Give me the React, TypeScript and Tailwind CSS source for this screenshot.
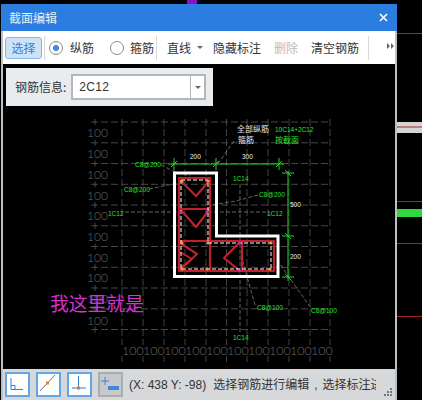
import React from "react";

const FONT = "font-['Noto_Sans_CJK_SC','Liberation_Sans',sans-serif]";

const rows = [122, 142.8, 163.5, 184.3, 205, 225.8, 246.5, 267.3, 288, 308.8, 329.5];
const cols = [122, 143, 164, 185, 206, 226.5, 247, 268, 289, 310, 330];
const leftLabels = [132, 153, 174, 194.5, 215, 236, 257, 277, 298, 320];
const bottomLabels = [122, 143, 164, 185, 206, 227, 248, 269, 290, 311];

const greenLabels: [string, number, number][] = [
  ["C8@200", 135, 166.5],
  ["C8@200", 124, 191.5],
  ["1C12", 108, 215.5],
  ["1C14", 233, 180.5],
  ["C8@200", 259, 196.5],
  ["1C12", 267, 215.5],
  ["C8@100", 257, 309.5],
  ["C8@100", 311, 312.5],
  ["1C14", 233, 339.5],
  ["10C14+2C12", 275, 132],
];

const whiteLabels: [string, number, number][] = [
  ["200", 190, 159],
  ["300", 242, 159],
  ["500", 290, 206.5],
  ["200", 290, 258.5],
];

const leaders = [
  "M161 165L173 171L190 176",
  "M149 189L178 183",
  "M125 212H181",
  "M234 141L222 158L216 166",
  "M258 195L236 201L212 205",
  "M266 212H208",
  "M240 184V333",
  "M241 255L255 305",
  "M277 260L311 308",
];

function Drawing() {
  return (
    <svg viewBox="3 64 393 305" className="block h-[305px] w-[393px]">
      {rows.map((y) => (
        <path key={y} d={`M91 ${y}H331`} stroke="#585858" strokeWidth="0.8" strokeDasharray="7 3" />
      ))}
      {rows.map((y) => (
        <path key={`t${y}`} d={`M95 ${y - 3}V${y + 3}`} stroke="#585858" strokeWidth="0.8" />
      ))}
      {cols.map((x) => (
        <path key={x} d={`M${x} 119V345M${x} 356V362`} stroke="#525252" strokeWidth="0.8" strokeDasharray="7 3" />
      ))}
      <g fill="#686868" fontFamily="Lato,'Liberation Sans',sans-serif" fontWeight="300" fontSize="12">
        {leftLabels.map((y) => (
          <text key={y} x="87" y={y + 5}>100</text>
        ))}
        {bottomLabels.map((x) => (
          <text key={x} x={x} y="355" fontSize="12.5">100</text>
        ))}
      </g>

      <g fill="none" stroke="#8c8c8c" strokeWidth="0.7" strokeDasharray="4 2">
        {leaders.map((d) => (
          <path key={d} d={d} />
        ))}
      </g>

      <g fill="none" stroke="#22d428" strokeWidth="1">
        <path d="M168 164H284" />
        <path d="M174 158V170M216 158V170M279 158V170" />
        <path d="M171 167L177 161M213 167L219 161M276 167L282 161" />
        <path d="M288 171V281" />
        <path d="M282 173H294M282 236H294M282 277H294" />
        <path d="M285 170L291 176M285 233L291 239M285 274L291 280" />
      </g>

      <path d="M174.5 173H216.5V236H278V276.5H174.5Z" fill="none" stroke="#fff" strokeWidth="3" />

      <g fill="none" stroke="#c0202c" strokeWidth="2.2" strokeLinejoin="round">
        <path d="M179 178H210V241H274V271H179Z" />
        <path d="M179 209H210M179 241H210M210 241V271M242 241V271" />
        <path d="M180 180L196 196L210 180" />
        <path d="M180 209L196 227L210 209" />
        <path d="M180 243L197 254L180 270" />
        <path d="M180 252L192 259L180 268" strokeWidth="1.8" />
        <path d="M240 242L224 258L240 271" />
      </g>

      <path
        d="M181 180H208V243H271V269H181Z"
        fill="none"
        stroke="#ffffff"
        strokeWidth="1"
        strokeDasharray="4 2"
      />

      <g fill="#e8a040">
        <circle cx="182" cy="181" r="1.6" />
        <circle cx="208" cy="181" r="1.6" />
        <circle cx="208" cy="243" r="1.6" />
        <circle cx="182" cy="243" r="1.6" />
        <circle cx="182" cy="269" r="1.6" />
        <circle cx="207" cy="269" r="1.6" />
        <circle cx="271" cy="243" r="1.6" />
        <circle cx="270" cy="269" r="1.6" />
      </g>
      <g fill="#c028c8">
        <circle cx="181" cy="212" r="1.5" />
        <circle cx="207" cy="212" r="1.5" />
        <circle cx="239.5" cy="243" r="1.5" />
        <circle cx="239.5" cy="271" r="1.5" />
      </g>

      <g fontSize="6.5" fontFamily="'Liberation Sans',sans-serif">
        {greenLabels.map(([t, x, y]) => (
          <text key={`${t}${x}`} x={x} y={y} fill="#2ee034">{t}</text>
        ))}
        {whiteLabels.map(([t, x, y]) => (
          <text key={`${t}${x}`} x={x} y={y} fill="#f0f0f0">{t}</text>
        ))}
      </g>
      <g fontSize="8" fontFamily="'Noto Sans CJK SC',sans-serif">
        <text x="237" y="132" fill="#e8e8e8">全部纵筋</text>
        <text x="238" y="143" fill="#e8e8e8">箍筋</text>
        <text x="275" y="143" fill="#2ee034">按截面</text>
      </g>

      <text x="50" y="311" fill="#d830d0" fontSize="18.8" fontFamily="'Noto Sans CJK SC',sans-serif">
        我这里就是
      </text>
    </svg>
  );
}

function Radio({ checked }: { checked?: boolean }) {
  return (
    <span className="flex h-[14px] w-[14px] items-center justify-center rounded-full border border-[#8a8a8a] bg-white">
      {checked && <span className="h-[6px] w-[6px] rounded-full bg-[#3f86dc]" />}
    </span>
  );
}

function Toolbar() {
  return (
    <div className="flex h-[33px] items-center bg-white pl-[2px] text-xs text-[#333]">
      <button className="h-[22px] w-[37px] rounded-[3px] border border-[#86b6e6] bg-[#cfe3f7] text-[#2f80dd]">选择</button>
      <span className="ml-[2px] h-[24px] w-px bg-[#d8d8d8]" />
      <span className="ml-[4px]"><Radio checked /></span>
      <span className="ml-[7px]">纵筋</span>
      <span className="ml-[16px]"><Radio /></span>
      <span className="ml-[6px]">箍筋</span>
      <span className="ml-[2px] h-[24px] w-px bg-[#d8d8d8]" />
      <span className="ml-[10px]">直线</span>
      <span className="ml-[6px] h-0 w-0 border-x-[3px] border-t-[3px] border-x-transparent border-t-[#666]" />
      <span className="ml-[10px]">隐藏标注</span>
      <span className="ml-[13px] text-[#bcbcbc]">删除</span>
      <span className="ml-[13px]">清空钢筋</span>
      <span className="ml-[9px] h-[24px] w-px bg-[#d8d8d8]" />
      <svg viewBox="0 0 7 6" className="ml-[18px] mb-[4px] h-[6px] w-[7px]" fill="#666">
        <path d="M0 0L3 3L0 6ZM4 0L7 3L4 6Z" />
      </svg>
    </div>
  );
}

function InfoField() {
  return (
    <div className="absolute left-[3px] top-[4px] flex h-[38px] w-[207px] items-center bg-[#e8ecee] pl-[9px] text-xs text-[#333]">
      <span>钢筋信息:</span>
      <div className="ml-[5px] flex h-[26px] w-[135px] items-center border-2 border-[#b4b6b8] bg-white">
        <span className="flex-1 pl-[6px] font-['Liberation_Sans',sans-serif] text-[12px] tracking-[0.3px]">2C12</span>
        <span className="flex h-full w-[14px] items-center justify-center border-l border-[#b4b6b8]">
          <span className="h-0 w-0 border-x-[3px] border-t-[3px] border-x-transparent border-t-[#666]" />
        </span>
      </div>
    </div>
  );
}

function ToolIcon({ active, children }: { active?: boolean; children: React.ReactNode }) {
  return (
    <span
      className={
        active
          ? "h-[25px] w-[25px] border-2 border-[#aaacae] bg-[#c6c8ca]"
          : "h-[25px] w-[25px] border-2 border-[#62a6ea] bg-white"
      }
    >
      <svg viewBox="1 1 21 21" className="block h-full w-full">
        {children}
      </svg>
    </span>
  );
}

function StatusBar() {
  return (
    <div className="relative flex h-[31px] items-center gap-[6px] bg-[#d6d8da] pl-[2px] text-xs text-[#333]">
      <ToolIcon>
        <path d="M5 5V16.5H17" fill="none" stroke="#2f7fd0" strokeWidth="1" />
        <path d="M5 12.5H9V16.5" fill="none" stroke="#2f7fd0" strokeWidth="1" />
      </ToolIcon>
      <ToolIcon>
        <path d="M3 18L18 2" stroke="#555" strokeWidth="0.8" />
        <rect x="9" y="8.5" width="3" height="3" fill="#e8803a" />
      </ToolIcon>
      <ToolIcon>
        <path d="M4 15H18M10.5 3V15" stroke="#2f7fd0" strokeWidth="1" />
        <circle cx="10.5" cy="15" r="1.7" fill="#e0702a" />
      </ToolIcon>
      <ToolIcon active>
        <path d="M2 8H10M6 4V12" stroke="#3f86dc" strokeWidth="1" />
        <rect x="9" y="13" width="11" height="4" fill="#3f86dc" />
      </ToolIcon>
      <span className="w-[247px] overflow-hidden whitespace-nowrap text-[12px]">
        <span className="font-['Liberation_Sans',sans-serif]">(X: 438 Y: -98)</span>
        <span className="ml-[7px]">选择钢筋进行编辑</span>
        <span className="mx-[5px] font-['Liberation_Sans',sans-serif]">,</span>
        <span>选择标注进</span>
      </span>
      <svg viewBox="0 0 8 8" className="absolute bottom-[4px] right-[3px] h-[8px] w-[8px]" fill="#777">
        <path d="M6 0h2v2H6zM3 3h2v2H3zM6 3h2v2H6zM0 6h2v2H0zM3 6h2v2H3zM6 6h2v2H6z" />
      </svg>
    </div>
  );
}

export default function App() {
  return (
    <div className={`relative flex h-[400px] w-[422px] overflow-hidden bg-black ${FONT}`}>
      <span className="absolute left-[187px] top-0 h-[4px] w-[10px] bg-[#8a10c8]" />

      <div className="ml-px mt-[4px] flex h-[396px] w-[396px] flex-col">
        <div className="flex h-[27px] items-center justify-between bg-[#2b7de0] pl-[8px] pr-[9px] text-xs text-[#e8f0fa]">
          <span>截面编辑</span>
          <svg viewBox="0 0 9 9" className="h-[9px] w-[9px]" stroke="#fff" strokeWidth="1.6">
            <path d="M1 1L8 8M8 1L1 8" />
          </svg>
        </div>
        <div className="flex-1 border-x-2 border-[#bcc0c4]">
          <Toolbar />
          <div className="relative bg-black">
            <Drawing />
            <InfoField />
          </div>
          <StatusBar />
        </div>
      </div>

      <svg viewBox="0 0 25 400" className="block h-[400px] w-[25px]">
        <path d="M0 33.5H25M0 201.5H25M0 243.5H25M0 316.5H25" stroke="#a82028" strokeWidth="1" />
        <rect y="122" width="25" height="11" fill="#d4d4d4" />
        <path d="M0 127H25" stroke="#a82028" strokeWidth="1" />
        <rect y="209" width="25" height="8" fill="#2fd83c" />
      </svg>
    </div>
  );
}
